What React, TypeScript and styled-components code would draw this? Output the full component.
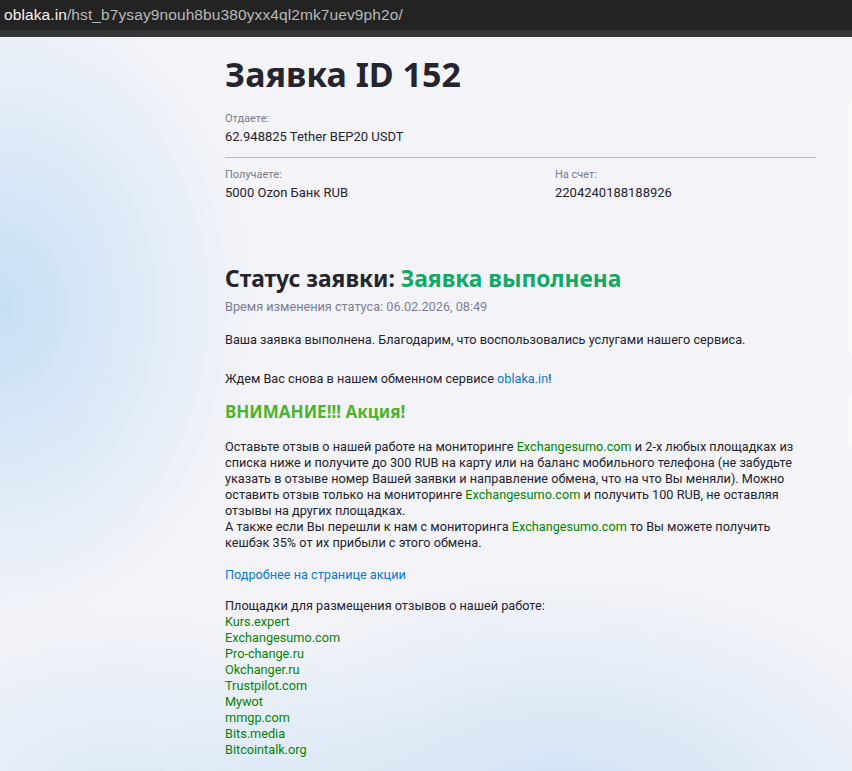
import React from "react";
import styled, { createGlobalStyle } from "styled-components";

const GlobalStyle = createGlobalStyle`
  html, body {
    margin: 0;
    padding: 0;
  }
  body {
    font-family: Roboto, "Noto Sans", sans-serif;
    color: #23232f;
    overflow-x: hidden;
    background: #f4f4f8;
  }
  * {
    box-sizing: border-box;
  }
`;

const AddressBar = styled.div`
  height: 30px;
  background: #232323;
  display: flex;
  align-items: center;
  padding-left: 4px;
  font-family: "Liberation Sans", Arial, sans-serif;
  font-size: 15.5px;
  color: #b9b9b9;
  letter-spacing: 0.1px;

  b {
    font-weight: normal;
    color: #f2f2f2;
  }
`;

const TabStrip = styled.div`
  height: 7px;
  background: #363636;
`;

const Page = styled.div`
  min-height: 734px;
  padding-top: 15px;
  overflow: hidden;
  background:
    radial-gradient(ellipse 260px 330px at 0px 270px, rgba(196, 222, 246, 0.95), rgba(196, 222, 246, 0) 100%),
    radial-gradient(ellipse 420px 260px at 560px 790px, rgba(200, 222, 244, 0.9), rgba(200, 222, 244, 0) 100%),
    radial-gradient(ellipse 320px 200px at 120px 760px, rgba(214, 230, 246, 0.8), rgba(214, 230, 246, 0) 100%),
    #f4f4f8;
`;

const Layout = styled.div`
  display: grid;
  grid-template-columns: 591px 260px;
  column-gap: 32px;
  margin-left: 225px;
`;

const Main = styled.main`
  font-size: 12.7px;
  line-height: 16px;
`;

const Side = styled.aside`
  display: flex;
  flex-direction: column;
  gap: 32px;
  padding-top: 46px;
`;

const SideCard = styled.div<{ $h: number }>`
  height: ${(p) => p.$h}px;
  background: rgba(255, 255, 255, 0.55);
  border-radius: 10px;
`;

const Heading = styled.h1`
  margin: 0;
  font-family: "Noto Sans", sans-serif;
  font-weight: 700;
  color: #25252f;
`;

const Title = styled(Heading)`
  font-size: 34px;
  line-height: 44px;
`;

const Field = styled.div`
  display: flex;
  flex-direction: column;
  gap: 3px;
`;

const Label = styled.span`
  font-size: 11px;
  line-height: 14px;
  color: #7a7a8e;
`;

const Value = styled.span`
  font-size: 13px;
  line-height: 16px;
  color: #23232f;
`;

const GiveBlock = styled.div`
  margin-top: 16px;
  padding-bottom: 12px;
  border-bottom: 1px solid #8cc3ec;
`;

const GetRow = styled.div`
  display: grid;
  grid-template-columns: 330px 1fr;
  margin-top: 10px;
`;

const StatusTitle = styled(Heading).attrs({ as: "h2" })`
  margin-top: 63px;
  font-size: 22.8px;
  line-height: 30px;

  span {
    color: #12a866;
  }
`;

const StatusTime = styled.div`
  margin-top: 5px;
  color: #7c7c98;
`;

const Text = styled.p<{ $gap?: number }>`
  margin: ${(p) => p.$gap ?? 0}px 0 0;
`;

const Promo = styled(Heading).attrs({ as: "h3" })`
  margin-top: 14px;
  font-size: 17px;
  line-height: 22px;
  color: #4db42b;
`;

const BlueLink = styled.a`
  color: #0a78d8;
  text-decoration: none;
`;

const GreenLink = styled.a`
  color: #038503;
  text-decoration: none;
`;

const Sites = styled.div`
  display: flex;
  flex-direction: column;
`;

const sites = [
  "Kurs.expert",
  "Exchangesumo.com",
  "Pro-change.ru",
  "Okchanger.ru",
  "Trustpilot.com",
  "Mywot",
  "mmgp.com",
  "Bits.media",
  "Bitcointalk.org",
];

export default function App() {
  return (
    <>
      <GlobalStyle />
      <AddressBar>
        <b>oblaka.in</b>/hst_b7ysay9nouh8bu380yxx4ql2mk7uev9ph2o/
      </AddressBar>
      <TabStrip />
      <Page>
        <Layout>
          <Main>
            <Title>Заявка ID 152</Title>
            <GiveBlock>
              <Field>
                <Label>Отдаете:</Label>
                <Value>62.948825 Tether BEP20 USDT</Value>
              </Field>
            </GiveBlock>
            <GetRow>
              <Field>
                <Label>Получаете:</Label>
                <Value>5000 Ozon Банк RUB</Value>
              </Field>
              <Field>
                <Label>На счет:</Label>
                <Value>2204240188188926</Value>
              </Field>
            </GetRow>

            <StatusTitle>
              Статус заявки: <span>Заявка выполнена</span>
            </StatusTitle>
            <StatusTime>Время изменения статуса: 06.02.2026, 08:49</StatusTime>

            <Text $gap={17}>
              Ваша заявка выполнена. Благодарим, что воспользовались услугами нашего сервиса.
            </Text>
            <Text $gap={23}>
              Ждем Вас снова в нашем обменном сервисе <BlueLink href="#">oblaka.in</BlueLink>!
            </Text>

            <Promo>ВНИМАНИЕ!!! Акция!</Promo>
            <Text $gap={16}>
              Оставьте отзыв о нашей работе на мониторинге{" "}
              <GreenLink href="#">Exchangesumo.com</GreenLink> и 2-х любых площадках из
              списка ниже и получите до 300 RUB на карту или на баланс мобильного телефона
              (не забудьте указать в отзыве номер Вашей заявки и направление обмена, что на
              что Вы меняли). Можно оставить отзыв только на мониторинге{" "}
              <GreenLink href="#">Exchangesumo.com</GreenLink> и получить 100 RUB, не
              оставляя отзывы на других площадках.
              <br />
              А также если Вы перешли к нам с мониторинга{" "}
              <GreenLink href="#">Exchangesumo.com</GreenLink> то Вы можете получить кешбэк
              35% от их прибыли с этого обмена.
            </Text>

            <Text $gap={16}>
              <BlueLink href="#">Подробнее на странице акции</BlueLink>
            </Text>

            <Text $gap={15}>Площадки для размещения отзывов о нашей работе:</Text>
            <Sites>
              {sites.map((s) => (
                <GreenLink key={s} href="#">
                  {s}
                </GreenLink>
              ))}
            </Sites>
          </Main>
          <Side>
            <SideCard $h={260} />
            <SideCard $h={62} />
          </Side>
        </Layout>
      </Page>
    </>
  );
}
